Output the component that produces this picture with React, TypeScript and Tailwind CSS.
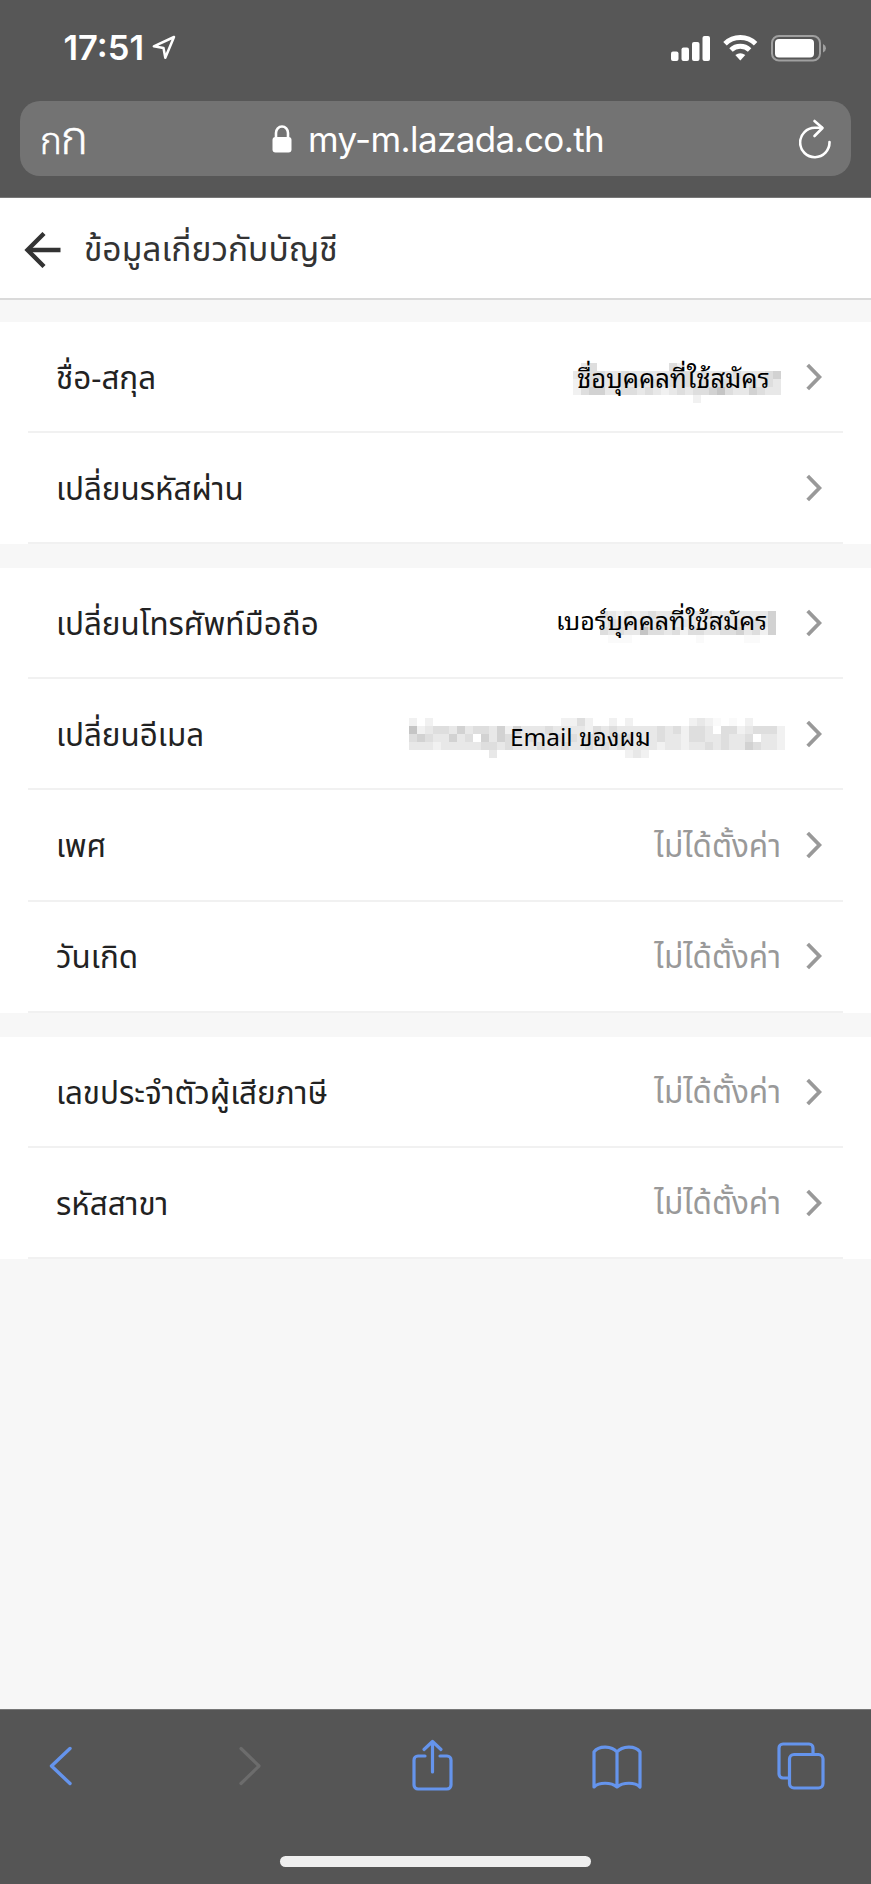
import type { ReactNode } from "react";

const SHADES: Record<string, string> = {
  "1": "#fafafa",
  "2": "#f1f1f1",
  "3": "#e8e8e8",
  "4": "#dedede",
  "5": "#d2d2d2",
  "6": "#c5c5c5",
};

function Mosaic({ rows, className }: { rows: string[]; className: string }) {
  const w = rows[0].length * 8;
  const h = rows.length * 8;
  return (
    <svg width={w} height={h} viewBox={`0 0 ${w} ${h}`} shapeRendering="crispEdges" className={className} aria-hidden="true">
      {rows.map((row, y) =>
        row.split("").map((c, x) => (c === "." ? null : <rect key={`${x}-${y}`} x={x * 8} y={y * 8} width="8" height="8" fill={SHADES[c]} />)),
      )}
    </svg>
  );
}

const NAME_MOSAIC = [
  ".34.........42............",
  "34443343333334434333433345",
  "23433343434344434344334343",
  "24553344343234344564335433",
  "...............2..........",
];
const PHONE_MOSAIC = [
  "4323234333233423333335",
  "3433343433332343343435",
  "4343364434244334453425",
  ".111........1.....11..",
];
const EMAIL_MOSAIC = [
  "2.2................2242..2.2.......2321.1.2....",
  "62344353443525333433332434333334342443.44234442",
  "45433534.5354334334343443444333433244334334.332",
  "33323333344343334334334343433332332334343354332",
  "..........3................232.................",
];

function Chevron() {
  return (
    <svg width="16" height="28" viewBox="0 0 16 28" fill="none" className="shrink-0" aria-hidden="true">
      <path d="M1.700 2 L13.400 14 L1.700 26" stroke="#999" strokeWidth="3.800" />
    </svg>
  );
}

function Row({ label, children }: { label: string; children?: ReactNode }) {
  return (
    <div className="mx-7 flex h-[111.2px] items-center justify-between border-b-2 border-[#f1f1f1] pr-[21px] pl-7">
      <span className="pt-[6px] text-[31.4px] leading-none whitespace-nowrap text-[#222]">{label}</span>
      <span className="flex items-center gap-[25px]">
        {children}
        <Chevron />
      </span>
    </div>
  );
}

function Unset() {
  return <span className="pt-[5px] text-[31.5px] leading-none whitespace-nowrap text-[#999]">ไม่ได้ตั้งค่า</span>;
}

function Censored({ rows, text, box, mosaic, label }: { rows: string[]; text: string; box: string; mosaic: string; label: string }) {
  return (
    <span className={`relative block ${box}`}>
      <Mosaic rows={rows} className={`absolute ${mosaic}`} />
      <span
        className={`absolute font-['Leelawadee_UI','Noto_Sans_Thai_Looped','Noto_Looped_Thai','Loma','Garuda','Waree','Noto_Sans',sans-serif] leading-none whitespace-nowrap text-black ${label}`}
      >
        {text}
      </span>
    </span>
  );
}

export default function App() {
  return (
    <div className="flex h-[1884px] w-[871px] flex-col overflow-hidden bg-[#f7f7f7] font-['Noto_Sans_Thai','Noto_Sans',sans-serif]">
      <header className="flex h-[198px] shrink-0 flex-col border-b border-[#777] bg-[#575757] text-white">
        <div className="mb-[4px] flex h-[97px] items-center justify-between pr-[44px] pl-[63.5px]">
          <div className="flex items-center gap-[8px]">
            <span className="font-['Inter',sans-serif] text-[34.5px] leading-none font-semibold">17:51</span>
            <svg width="24" height="25" viewBox="0 0 24 25" fill="none" className="mb-[3px]" aria-hidden="true">
              <path d="M22 2 L1.800 11.300 L11.500 13 L13.300 22.800 Z" stroke="white" strokeWidth="2.500" strokeLinejoin="round" />
            </svg>
          </div>
          <svg width="156" height="28" viewBox="0 0 156 28" aria-hidden="true">
            <g fill="white">
              <rect x="0" y="16.5" width="7.5" height="9.5" rx="2" />
              <rect x="10.5" y="12.5" width="7.5" height="13.5" rx="2" />
              <rect x="21" y="7" width="7.5" height="19" rx="2" />
              <rect x="31.5" y="1" width="7.5" height="25" rx="2" />
            </g>
            <g fill="none" stroke="white" strokeWidth="5">
              <path d="M54 8.800 A22 22 0 0 1 84.600 8.800" />
              <path d="M60 15 A13.500 13.500 0 0 1 78.600 15" />
            </g>
            <path d="M64.300 20 Q69.300 16.500 74.300 20 L69.300 25.500 Z" fill="white" />
            <rect x="101" y="1" width="48" height="24.500" rx="7" fill="none" stroke="#a0a0a0" strokeWidth="2" />
            <rect x="104" y="4" width="39" height="18.500" rx="4" fill="white" />
            <path d="M152 9 Q155 10.500 155 13.200 Q155 16 152 17.500 Z" fill="#a0a0a0" />
          </svg>
        </div>
        <div className="mx-[20px] flex h-[75px] items-center justify-between rounded-[20px] bg-[#737373] px-[20px]">
          <span className="flex w-[46px] items-baseline pt-[3px] leading-none font-light [-webkit-text-stroke:0.5px_white]">
            <span className="text-[37px] tracking-[-1px]">ก</span>
            <span className="text-[46px]">ก</span>
          </span>
          <span className="mr-[9px] flex items-center gap-[16px] pt-[1px]">
            <svg width="20" height="28" viewBox="0 0 20 28" aria-hidden="true">
              <path d="M4 13 V8 a6 6.500 0 0 1 12 0 V13" fill="none" stroke="white" strokeWidth="2.600" />
              <rect x="0.500" y="12" width="19" height="15.500" rx="3" fill="white" />
            </svg>
            <span className="font-['Inter',sans-serif] text-[35px] leading-none tracking-[-0.62px]">my-m.lazada.co.th</span>
          </span>
          <svg width="32" height="40" viewBox="0 0 32 40" fill="none" stroke="white" strokeWidth="2.600" strokeLinecap="round" strokeLinejoin="round" aria-hidden="true">
            <path d="M30.500 23 A14.700 14.700 0 1 1 16 8.800 H23" />
            <path d="M15.500 2 L23.500 9 L15.500 17" />
          </svg>
        </div>
      </header>

      <main className="flex flex-1 flex-col">
        <div className="flex h-[102px] shrink-0 items-center gap-[23px] border-b-2 border-[#dadada] bg-white pt-[4px] pl-[24px]">
          <svg width="37" height="36" viewBox="0 0 37 36" fill="none" stroke="#333" strokeWidth="4.400" aria-hidden="true">
            <path d="M20 1.500 L3.500 18 L20 34.500" />
            <path d="M4 18 H36.500" />
          </svg>
          <h1 className="pt-[2px] text-[33.6px] leading-none whitespace-nowrap text-[#333]">ข้อมูลเกี่ยวกับบัญชี</h1>
        </div>

        <section className="mt-[22px] bg-white">
          <Row label="ชื่อ-สกุล">
            <Censored rows={NAME_MOSAIC} text="ชื่อบุคคลที่ใช้สมัคร" box="h-[40px] w-[208px]" mosaic="top-[6px] left-0" label="top-[7px] left-[4px] text-[25.6px]" />
          </Row>
          <Row label="เปลี่ยนรหัสผ่าน" />
        </section>

        <section className="mt-[23.6px] bg-white">
          <Row label="เปลี่ยนโทรศัพท์มือถือ">
            <Censored rows={PHONE_MOSAIC} text="เบอร์บุคคลที่ใช้สมัคร" box="h-[40px] w-[224px]" mosaic="top-[8px] left-[43px]" label="top-[4px] left-[-1px] text-[25.1px]" />
          </Row>
          <Row label="เปลี่ยนอีเมล">
            <Censored rows={EMAIL_MOSAIC} text="Email ของผม" box="h-[40px] w-[372px]" mosaic="top-[4px] left-0" label="top-[9px] left-[101px] text-[24.4px]" />
          </Row>
          <Row label="เพศ">
            <Unset />
          </Row>
          <Row label="วันเกิด">
            <Unset />
          </Row>
        </section>

        <section className="mt-[24.2px] bg-white">
          <Row label="เลขประจำตัวผู้เสียภาษี">
            <Unset />
          </Row>
          <Row label="รหัสสาขา">
            <Unset />
          </Row>
        </section>
      </main>

      <footer className="flex h-[175px] shrink-0 flex-col items-center border-t border-[#777] bg-[#555]">
        <div className="flex h-[112px] w-full items-center pl-[48px] text-[#6594ec]">
          <svg width="26" height="40" viewBox="0 0 26 40" fill="none" stroke="currentColor" strokeWidth="3.400" strokeLinecap="round" strokeLinejoin="round" aria-hidden="true">
            <path d="M22 2.500 L3.500 20 L22 37.500" />
          </svg>
          <svg width="26" height="40" viewBox="0 0 26 40" fill="none" stroke="#6c6c6c" strokeWidth="3.200" strokeLinecap="round" strokeLinejoin="round" className="ml-[163px]" aria-hidden="true">
            <path d="M4 2.500 L22 20 L4 37.500" />
          </svg>
          <svg width="42" height="52" viewBox="0 0 42 52" fill="none" stroke="currentColor" strokeWidth="3.200" strokeLinecap="round" strokeLinejoin="round" className="mb-[2px] ml-[148.5px]" aria-hidden="true">
            <path d="M13 17 H6 a4 4 0 0 0 -4 4 V46 a4 4 0 0 0 4 4 H35 a4 4 0 0 0 4 -4 V21 a4 4 0 0 0 -4 -4 H28" />
            <path d="M20.500 33 V2.500 M12 10.500 L20.500 2.500 L29 10.500" />
          </svg>
          <svg width="50" height="44" viewBox="0 0 50 44" fill="none" stroke="currentColor" strokeWidth="3.200" strokeLinecap="round" strokeLinejoin="round" className="mt-[1px] ml-[138px]" aria-hidden="true">
            <path d="M25 7 C20 1 7 0 2 7 V42 C7 37 19 37 25 42 C31 37 43 37 48 42 V7 C43 0 30 1 25 7 V42" />
          </svg>
          <svg width="48" height="48" viewBox="0 0 48 48" fill="none" stroke="currentColor" strokeWidth="3.200" strokeLinejoin="round" className="ml-[135.5px]" aria-hidden="true">
            <path d="M36 12 V6 a4 4 0 0 0 -4 -4 H6 a4 4 0 0 0 -4 4 V32 a4 4 0 0 0 4 4 H12" />
            <rect x="12.500" y="12.500" width="33.500" height="33.500" rx="4.500" />
          </svg>
        </div>
        <div className="mt-[34px] h-[11px] w-[311px] rounded-full bg-[#efefef]" />
      </footer>
    </div>
  );
}
